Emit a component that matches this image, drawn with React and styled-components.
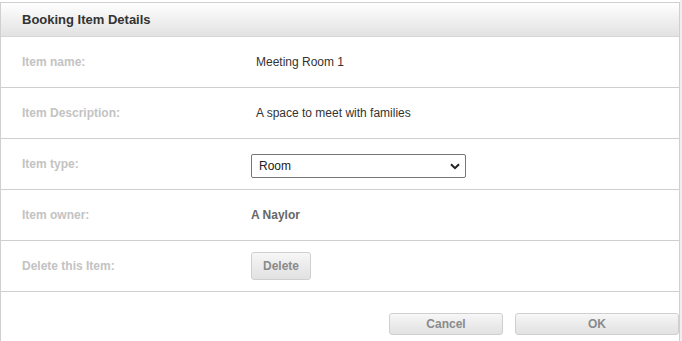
import React from "react";
import styled, { createGlobalStyle } from "styled-components";

const Global = createGlobalStyle`
  html, body { margin: 0; padding: 0; background: #fff; }
  body { font-family: "Liberation Sans", Arial, sans-serif; width: 682px; height: 341px; overflow: hidden; }
`;

const Page = styled.div`
  width: 680px;
  padding-top: 2px;
  border-right: 2px solid #efefef;
  height: 339px;
`;

const Panel = styled.div`
  width: 678px;
  border: 1px solid #d0d0d0;
  border-bottom: none;
  height: 338px;
  background: #fff;
`;

const Header = styled.div`
  height: 33px;
  display: flex;
  align-items: center;
  padding-left: 21px;
  background: linear-gradient(to bottom, #ffffff 0%, #f3f3f3 40%, #e2e2e2 100%);
  border-bottom: 1px solid #d6d6d6;
  font-size: 13px;
  font-weight: bold;
  color: #333;
`;

const Row = styled.div`
  height: 50px;
  display: flex;
  align-items: center;
  border-bottom: 1px solid #cfcfcf;
  padding-left: 21px;
`;

const Label = styled.div`
  width: 229px;
  font-size: 12px;
  font-weight: bold;
  color: #c3c3c3;
`;

const Value = styled.div`
  padding-left: ${(p) => (p.$indent ? "5px" : "0")};
  font-size: 12px;
  font-weight: ${(p) => (p.$bold ? "bold" : "normal")};
  color: ${(p) => (p.$bold ? "#666" : "#333")};
`;

const SelectBox = styled.div`
  position: relative;
  box-sizing: border-box;
  width: 215px;
  height: 24px;
  margin-top: 4px;
  border: 1px solid #767676;
  border-radius: 2px;
  display: flex;
  align-items: center;
  padding-left: 7px;
  font-size: 12px;
  color: #222;
`;

const Chevron = styled.svg`
  position: absolute;
  right: 5px;
  top: 8px;
`;

const Btn = styled.button`
  font-family: "Liberation Sans", Arial, sans-serif;
  font-size: 12px;
  font-weight: bold;
  color: #8a8a8a;
  border: 1px solid #cfcfcf;
  border-radius: 3px;
  background: linear-gradient(to bottom, #f7f7f7 0%, #ebebeb 50%, #e2e2e2 100%);
  width: ${(p) => p.$w}px;
  height: ${(p) => p.$h}px;
  padding: 0;
  box-sizing: border-box;
`;

const Footer = styled.div`
  display: flex;
  justify-content: flex-end;
  padding-top: 21px;
  gap: 12px;
`;

export default function App() {
  return (
    <>
      <Global />
      <Page>
        <Panel>
          <Header>Booking Item Details</Header>
          <Row>
            <Label>Item name:</Label>
            <Value $indent>Meeting Room 1</Value>
          </Row>
          <Row>
            <Label>Item Description:</Label>
            <Value $indent>A space to meet with families</Value>
          </Row>
          <Row>
            <Label>Item type:</Label>
            <SelectBox>
              Room
              <Chevron width="10" height="7" viewBox="0 0 10 7">
                <path d="M1 1.2 L5 5.2 L9 1.2" fill="none" stroke="#222" strokeWidth="2" />
              </Chevron>
            </SelectBox>
          </Row>
          <Row>
            <Label>Item owner:</Label>
            <Value $bold>A Naylor</Value>
          </Row>
          <Row>
            <Label>Delete this Item:</Label>
            <Btn $w={60} $h={28}>Delete</Btn>
          </Row>
          <Footer>
            <Btn $w={114} $h={22}>Cancel</Btn>
            <Btn $w={164} $h={22}>OK</Btn>
          </Footer>
        </Panel>
      </Page>
    </>
  );
}
